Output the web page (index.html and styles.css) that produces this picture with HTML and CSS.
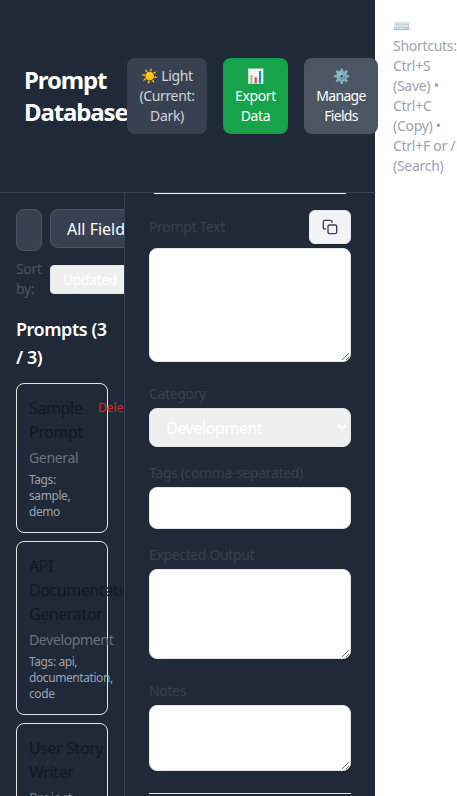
FILE: index.html
```html
<!DOCTYPE html>
<html lang="en">
<head>
<meta charset="utf-8">
<title>Prompt Database</title>
<link rel="stylesheet" href="styles.css">
</head>
<body>
<div class="app">
  <header class="header">
    <h1 class="title">Prompt Database</h1>
    <div class="actions">
      <button class="btn theme">☀️ Light (Current: Dark)</button>
      <button class="btn export">📊 Export Data</button>
      <button class="btn manage">⚙️ Manage Fields</button>
      <div class="shortcuts">⌨️<br>Shortcuts:<br>Ctrl+S<br>(Save) •<br>Ctrl+C<br>(Copy) •<br>Ctrl+F or /<br>(Search)</div>
    </div>
  </header>
  <div class="body">
    <aside class="sidebar">
      <div class="search-row">
        <input class="search" type="text" aria-label="Search">
        <select class="fields"><option>All Fields</option></select>
      </div>
      <div class="sort-row">
        <span class="sort-label">Sort by:</span>
        <select class="sort"><option>Updated</option></select>
      </div>
      <h2 class="count">Prompts (3 / 3)</h2>
      <div class="list">
        <article class="card">
          <div class="card-head"><h3 class="name">Sample Prompt</h3><button class="delete">Delete</button></div>
          <p class="category">General</p>
          <p class="tags">Tags: sample, demo</p>
        </article>
        <article class="card">
          <div class="card-head"><h3 class="name">API Documentation Generator</h3></div>
          <p class="category">Development</p>
          <p class="tags">Tags: api, documentation, code</p>
        </article>
        <article class="card">
          <div class="card-head"><h3 class="name wide">User Story Writer</h3></div>
          <p class="category">Project Management</p>
          <p class="tags">Tags: agile</p>
        </article>
      </div>
    </aside>
    <main class="editor">
      <div class="title-end"></div>
      <div class="field-head">
        <label class="label" for="prompt">Prompt Text</label>
        <button class="copy" aria-label="Copy">
          <svg width="16" height="16" viewBox="0 0 24 24" fill="none" stroke="currentColor" stroke-width="2" stroke-linecap="round" stroke-linejoin="round"><rect x="9" y="9" width="13" height="13" rx="2"/><path d="M5 15H4a2 2 0 0 1-2-2V4a2 2 0 0 1 2-2h9a2 2 0 0 1 2 2v1"/></svg>
        </button>
      </div>
      <textarea class="control prompt" id="prompt"></textarea>
      <label class="label" for="category">Category</label>
      <select class="control category-select" id="category"><option>Development</option></select>
      <label class="label" for="tags">Tags (comma-separated)</label>
      <input class="control tags-input" id="tags" type="text">
      <label class="label" for="output">Expected Output</label>
      <textarea class="control output" id="output"></textarea>
      <label class="label" for="notes">Notes</label>
      <textarea class="control notes" id="notes"></textarea>
      <div class="divider"></div>
    </main>
  </div>
</div>
</body>
</html>
```
FILE: styles.css
```css
* { box-sizing: border-box; margin: 0; padding: 0; }
body {
  background: #fff;
  font-family: "Noto Sans", sans-serif;
  font-size: 16px;
  line-height: 24px;
  overflow: hidden;
}
button, input, select, textarea { font: inherit; color: inherit; }
h1, h2, h3, p, .btn, .shortcuts, .label, .sort-label, .category-select { letter-spacing: -0.025em; }
.app {
  width: 375px;
  height: 796px;
  display: flex;
  flex-direction: column;
  background: #1f2937;
}
.header {
  flex: none;
  height: 193px;
  padding: 16px 24px;
  border-bottom: 1px solid #374151;
  display: flex;
  align-items: center;
}
.title {
  flex: none;
  width: 103px;
  font-size: 24px;
  line-height: 32px;
  font-weight: 700;
  letter-spacing: -0.047em;
  color: #fff;
}
.actions { flex: none; display: flex; align-items: center; gap: 16px; }
.btn {
  flex: none;
  height: 76px;
  padding: 8px 11px;
  border: 0;
  border-radius: 8px;
  font-size: 14px;
  line-height: 20px;
  text-align: center;
}
.theme { width: 80px; background: #374151; color: #d1d5db; }
.export { width: 65px; background: #16a34a; color: #fff; }
.manage { width: 74px; background: #4b5563; color: #fff; letter-spacing: -0.05em; }
.shortcuts {
  width: 65px;
  margin-left: -1px;
  font-size: 14px;
  line-height: 20px;
  white-space: nowrap;
  letter-spacing: -0.02em;
  color: #9ca3af;
}
.body { flex: 1; min-height: 0; display: flex; }
.sidebar {
  flex: none;
  width: 125px;
  padding: 16px;
  border-right: 1px solid #374151;
  overflow: hidden;
}
.search-row { display: flex; align-items: flex-start; gap: 8px; height: 42px; }
.search, .fields {
  flex: none;
  border: 1px solid #4b5563;
  border-radius: 8px;
  background: #374151;
  color: #fff;
}
.search { width: 26px; height: 42px; padding: 8px 12px; }
.fields { width: 130px; height: 39px; padding: 0 12px; }
.sort-row { display: flex; align-items: center; gap: 8px; height: 40px; margin-top: 8px; }
.sort-label { flex: none; width: 26px; font-size: 14px; line-height: 20px; color: #4b5563; }
.sort {
  flex: none;
  width: 110px;
  height: 29px;
  padding: 1px 8px 0;
  border: 1px solid #e5e7eb;
  border-radius: 4px;
  background: #efefef;
  color: #fff;
  font-size: 14px;
  letter-spacing: -0.03em;
}
.count {
  margin-top: 16px;
  margin-right: -4px;
  font-size: 18px;
  line-height: 28px;
  font-weight: 600;
  color: #fff;
}
.list { display: flex; flex-direction: column; gap: 8px; margin-top: 12px; }
.card { padding: 12px; border: 1px solid #e5e7eb; border-radius: 8px; }
.card-head { display: flex; align-items: flex-start; justify-content: space-between; }
.name { flex: none; width: 69px; font-size: 16px; line-height: 24px; font-weight: 400; color: #111827; }
.name.wide { width: 80px; }
.delete {
  flex: none;
  height: 24px;
  border: 0;
  background: none;
  font-size: 12px;
  line-height: 16px;
  color: #dc2626;
}
.category { margin-top: 4px; font-size: 14px; line-height: 20px; color: #6b7280; }
.tags { margin-top: 4px; font-size: 12px; line-height: 16px; letter-spacing: -0.035em; color: #9ca3af; }
.editor { flex: 1; min-width: 0; padding: 0 24px; overflow: hidden; }
.title-end { height: 1px; margin: 0 5px 16px; background: #f3f4f6; }
.field-head { display: flex; align-items: center; justify-content: space-between; height: 34px; margin-bottom: 4px; }
.label { display: block; font-size: 14px; line-height: 20px; font-weight: 400; color: #374151; }
.copy {
  display: flex;
  align-items: center;
  justify-content: center;
  width: 42px;
  height: 34px;
  border: 1px solid #e5e7eb;
  border-radius: 6px;
  background: #f3f4f6;
  color: #374151;
}
.control {
  display: block;
  width: 100%;
  padding: 8px 12px;
  border: 1px solid #e5e7eb;
  border-radius: 8px;
  background: #fff;
}
.prompt { height: 114px; margin-bottom: 22px; }
.label + .control { margin-top: 4px; }
.category-select { height: 39px; margin-bottom: 16px; padding: 0 12px; background: #efefef; color: #fff; }
.tags-input { height: 42px; margin-bottom: 16px; }
.output { height: 90px; margin-bottom: 22px; }
.notes { height: 66px; }
.divider { height: 1px; margin-top: 22px; background: #e5e7eb; }
```
